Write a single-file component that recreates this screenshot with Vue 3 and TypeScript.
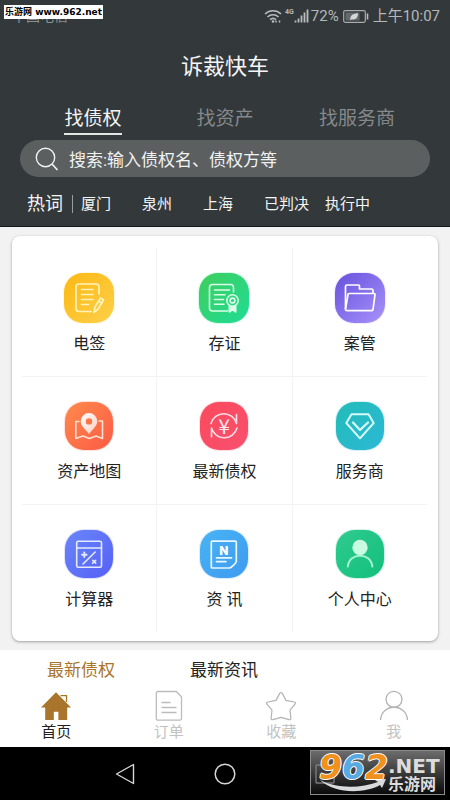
<script setup lang="ts">
import { ref } from 'vue'

interface Service {
  id: string
  label: string
  from: string
  to: string
  size: number
}

const searchTabs: string[] = ['找债权', '找资产', '找服务商']
const activeSearchTab = ref(0)
const keyword = ref('')

const hotWords: string[] = ['厦门', '泉州', '上海', '已判决', '执行中']

const services: Service[] = [
  { id: 'sign', label: '电签', from: '#fcb813', to: '#fdd04a', size: 50 },
  { id: 'evidence', label: '存证', from: '#3fce5c', to: '#1fdc96', size: 50 },
  { id: 'case', label: '案管', from: '#6750dc', to: '#a893fb', size: 50 },
  { id: 'map', label: '资产地图', from: '#ff8a4c', to: '#fb5b45', size: 48 },
  { id: 'claims', label: '最新债权', from: '#fb4a5c', to: '#f8506f', size: 48 },
  { id: 'provider', label: '服务商', from: '#22bcb8', to: '#2cb8d6', size: 48 },
  { id: 'calculator', label: '计算器', from: '#6a86f8', to: '#5560f6', size: 48 },
  { id: 'news', label: '资 讯', from: '#48b4f4', to: '#3f9af0', size: 48 },
  { id: 'profile', label: '个人中心', from: '#30cb90', to: '#12bf7c', size: 48 },
]

const feedTabs: string[] = ['最新债权', '最新资讯']
const activeFeedTab = ref(0)

const navItems = [
  { id: 'home', label: '首页' },
  { id: 'orders', label: '订单' },
  { id: 'favorites', label: '收藏' },
  { id: 'me', label: '我' },
]
const activeNav = ref('home')
</script>

<template>
  <div class="app">
    <header class="header">
      <div class="status">
        <span class="carrier">中国电信</span>
        <div class="status-right">
          <svg class="wifi" viewBox="0 0 18 14" aria-hidden="true">
            <g fill="none" stroke="#b9bbbc" stroke-width="1.6">
              <path d="M1 5a11.500 11.500 0 0 1 16 0" />
              <path d="M3.500 8a8 8 0 0 1 11 0" />
              <path d="M6 10.700a4.500 4.500 0 0 1 6 0" />
            </g>
            <circle cx="9" cy="12.500" r="1.300" fill="#b9bbbc" />
            <path d="M12 13.500v-2M15.500 13.500v-2" stroke="#b9bbbc" stroke-width="1.500" />
          </svg>
          <span class="net">4G</span>
          <svg class="signal" viewBox="0 0 15 14" aria-hidden="true">
            <path d="M1.500 13.500v-2M4.500 13.500v-4M7.500 13.500v-7M10.500 13.500v-10M13.500 13.500v-13" stroke="#b9bbbc" stroke-width="1.800" />
          </svg>
          <span>72%</span>
          <svg class="battery" viewBox="0 0 26 13" aria-hidden="true">
            <rect x="0.700" y="0.700" width="21.600" height="11.600" rx="1.500" fill="none" stroke="#a9abac" stroke-width="1.200" />
            <rect x="2.500" y="2.500" width="14" height="8" fill="#65696b" />
            <path d="M7.500 10.500c-1-4 1.500-7 7.500-7.200c0 4.500-2.500 7-6.200 5.900z" fill="#d5d7d7" />
            <path d="M24.500 3.500v6" stroke="#b9bbbc" stroke-width="1.600" />
          </svg>
          <span>上午10:07</span>
        </div>
      </div>

      <h1 class="title">诉裁快车</h1>

      <nav class="search-tabs">
        <div v-for="(tab, i) in searchTabs" :key="tab" class="search-tab-cell">
          <button
            type="button"
            class="search-tab"
            :class="{ active: activeSearchTab === i }"
            @click="activeSearchTab = i"
          >{{ tab }}</button>
        </div>
      </nav>

      <label class="search">
        <svg class="search-icon" viewBox="0 0 24 24" aria-hidden="true">
          <circle cx="10.500" cy="10.500" r="9.200" fill="none" stroke="#f1f2f2" stroke-width="1.400" />
          <path d="M17 17l5.500 6" stroke="#f1f2f2" stroke-width="1.700" />
        </svg>
        <input v-model="keyword" type="text" class="search-input" placeholder="搜索:输入债权名、债权方等" />
      </label>

      <div class="hot">
        <span class="hot-title">热词</span>
        <div class="hot-list">
          <a v-for="word in hotWords" :key="word" href="#" class="hot-word">{{ word }}</a>
        </div>
      </div>
    </header>

    <main class="content">
      <section class="card">
        <a v-for="s in services" :key="s.id" href="#" class="service">
          <svg class="service-icon" viewBox="0 0 50 50" aria-hidden="true">
            <defs>
              <linearGradient :id="'bg-' + s.id" x1="0" y1="0" x2="1" y2="1">
                <stop offset="0" :stop-color="s.from" />
                <stop offset="1" :stop-color="s.to" />
              </linearGradient>
              <linearGradient :id="'fg-' + s.id" x1="0" y1="0" x2="1" y2="1">
                <stop offset="0" stop-color="#ffffff" />
                <stop offset="1" stop-color="#ffffff" stop-opacity="0.65" />
              </linearGradient>
            </defs>
            <rect
              :x="(50 - s.size) / 2 - 1"
              :y="(50 - s.size) / 2 - 1"
              :width="s.size + 2"
              :height="s.size + 2"
              rx="20"
              :fill="s.to"
              opacity="0.18"
            />
            <rect
              :x="(50 - s.size) / 2"
              :y="(50 - s.size) / 2"
              :width="s.size"
              :height="s.size"
              rx="19"
              :fill="`url(#bg-${s.id})`"
            />

            <g v-if="s.id === 'sign'" fill="none" stroke="#fff3b8" stroke-width="1.700" stroke-linecap="round" stroke-linejoin="round">
              <path d="M35 21v-7a3 3 0 0 0-3-3H15a3 3 0 0 0-3 3v21.500a3 3 0 0 0 3 3h12" />
              <path d="M17.500 16.500H29M17.500 21.500H29M17.500 26.500H29M17.500 31.500h7" />
              <path d="M36.500 25l3 1.800-5.500 9.500-4 3 .8-5z" />
              <path d="M34.800 28.200l3 1.700" />
            </g>

            <g v-else-if="s.id === 'evidence'" fill="none" stroke="#dcffe9" stroke-width="1.600" stroke-linecap="round" stroke-linejoin="round">
              <path d="M34.500 19v-4.500a3 3 0 0 0-3-3h-18a3 3 0 0 0-3 3v20.500a3 3 0 0 0 3 3h15" />
              <path d="M15.500 17h15M15.500 21.800h10.500M15.500 26.500h9M15.500 31.200h9.500" />
              <circle cx="33.500" cy="27.500" r="5.700" />
              <circle cx="33.500" cy="27.500" r="2.400" />
              <path d="M30.300 33v6l3.200-2.500 3.200 2.500v-6" fill="#dcffe9" />
            </g>

            <g v-else-if="s.id === 'case'" fill="none" stroke="#ffffff" stroke-width="1.700" stroke-linejoin="round">
              <path d="M38 20v-2.500a1.500 1.500 0 0 0-1.500-1.500H24.500v-3a1 1 0 0 0-1-1H12a1.500 1.500 0 0 0-1.500 1.500V36" />
              <path d="M14 20.500h25a1 1 0 0 1 1 1.200L38 36.500a1.500 1.500 0 0 1-1.500 1.200H12a1.500 1.500 0 0 1-1.500-1.700L13 21.500a1 1 0 0 1 1-1z" />
            </g>

            <g v-else-if="s.id === 'map'">
              <path d="M15.500 20.500h-3.700v17l7.200-2.500 6.500 2.500 6.500-2.500 6.500 2.500v-17.500h-4" fill="none" stroke="#ffe1d2" stroke-width="1.600" stroke-linejoin="round" />
              <path fill-rule="evenodd" d="M25 12a8.300 8.300 0 0 0-8.300 8.300c0 5 5.300 8.500 8.300 13 3-4.500 8.300-8 8.300-13A8.300 8.300 0 0 0 25 12zm0 5.200a3.200 3.200 0 1 1 0 6.400 3.200 3.200 0 0 1 0-6.400z" fill="url(#fg-map)" />
            </g>

            <g v-else-if="s.id === 'claims'">
              <path d="M12 22.500a13.200 13.200 0 0 1 25.500 0v-9M38 27a13.200 13.200 0 0 1-25.500 0v9" fill="none" stroke="#ffdfe5" stroke-width="1.600" stroke-linecap="round" stroke-linejoin="round" />
              <text x="25" y="32.500" class="icon-yen">¥</text>
            </g>

            <g v-else-if="s.id === 'provider'" fill="none" stroke="#d4fbf8" stroke-width="2" stroke-linejoin="round">
              <path d="M16.500 13.300h17l5.200 8.700L25 37.300 11.300 22z" />
              <path d="M18 21.500l7 7.500 8-7.500" stroke-width="2.300" stroke-linecap="round" />
            </g>

            <g v-else-if="s.id === 'calculator'" fill="none" stroke="#e3eaff" stroke-width="1.600" stroke-linecap="round" stroke-linejoin="round">
              <rect x="12.700" y="12.300" width="24.800" height="26" rx="1.500" />
              <path d="M12.700 19h24.800" />
              <path d="M20.300 23.400v4.600M18 25.700h4.600" stroke-width="1.900" />
              <path d="M19 35l12.200-12" />
              <path d="M28.700 31.400l3 2.800M31.700 31.400l-3 2.800" />
            </g>

            <g v-else-if="s.id === 'news'" fill="none" stroke="#e9f8ff" stroke-width="1.700" stroke-linecap="round" stroke-linejoin="round">
              <path d="M12.300 13.200a1 1 0 0 1 1-1h23a1 1 0 0 1 1 1V32.500c0 1.500-5.500 6.500-7 6.500h-17a1 1 0 0 1-1-1z" />
              <path d="M17.500 28.900h15M17.500 32.600h9.500" />
              <text x="24.700" y="25.500" class="icon-letter">N</text>
            </g>

            <g v-else>
              <circle cx="25" cy="18.500" r="7.700" fill="#c8fbe2" />
              <path d="M12.800 37.500c1.500-14.500 23-14.500 24.500 0" fill="none" stroke="#a5f3cf" stroke-width="2" stroke-linecap="round" />
            </g>
          </svg>
          <span class="service-label">{{ s.label }}</span>
        </a>
      </section>
    </main>

    <div class="feed-tabs">
      <button
        v-for="(tab, i) in feedTabs"
        :key="tab"
        type="button"
        class="feed-tab"
        :class="{ active: activeFeedTab === i }"
        @click="activeFeedTab = i"
      >{{ tab }}</button>
    </div>

    <nav class="bottom-nav">
      <button
        v-for="item in navItems"
        :key="item.id"
        type="button"
        class="nav-item"
        :class="{ active: activeNav === item.id }"
        @click="activeNav = item.id"
      >
        <svg class="nav-icon" viewBox="0 0 32 32" aria-hidden="true">
          <g v-if="item.id === 'home'">
            <path d="M16 2.300L1 17.500h4.200V30h8.600v-8.300h4.600V30h8.800V17.500H31z" fill="#a9742c" />
            <path d="M20.500 5.700h6v6.300" fill="none" stroke="#a9742c" stroke-width="1.300" />
          </g>
          <g v-else-if="item.id === 'orders'" fill="none" stroke="#bcbcbc" stroke-width="1.300" stroke-linejoin="round">
            <path d="M5 1.500h18.500l5 5.500v21.500a1.700 1.700 0 0 1-1.700 1.700H5a1.700 1.700 0 0 1-1.700-1.700V3.200A1.700 1.700 0 0 1 5 1.500z" />
            <path d="M8.500 12.500h9M8.500 17.500h15M8.500 22.500h15" />
          </g>
          <path
            v-else-if="item.id === 'favorites'"
            d="M16 2.500q.9 0 1.300.9l3.700 7 8 1.600q2.400.5 1 2.200l-5 6 .9 8q0 2-1.900 1.400L16 27.300l-8 2.300q-1.900.6-1.900-1.400l.9-8-5-6q-1.400-1.700 1-2.200l8-1.600 3.700-7q.4-.9 1.300-.9z"
            fill="none"
            stroke="#b3b3b3"
            stroke-width="1.200"
            stroke-linejoin="round"
          />
          <g v-else fill="none" stroke="#b3b3b3" stroke-width="1.300">
            <circle cx="16" cy="9.300" r="8" />
            <path d="M2.500 30c1-17 26-17 27 0" />
          </g>
        </svg>
        <span>{{ item.label }}</span>
      </button>
    </nav>

    <footer class="system-bar">
      <button type="button" class="system-button" aria-label="返回">
        <svg viewBox="0 0 24 24" aria-hidden="true">
          <path d="M20.500 2.500v19L3.500 12z" fill="none" stroke="#d6d6d6" stroke-width="1.400" stroke-linejoin="round" />
        </svg>
      </button>
      <button type="button" class="system-button" aria-label="主屏幕">
        <svg viewBox="0 0 24 24" aria-hidden="true">
          <circle cx="12" cy="12" r="9.800" fill="none" stroke="#d6d6d6" stroke-width="1.500" />
        </svg>
      </button>
      <button type="button" class="system-button" aria-label="最近任务">
        <svg viewBox="0 0 24 24" aria-hidden="true">
          <rect x="3" y="3" width="18" height="18" rx="1" fill="none" stroke="#d6d6d6" stroke-width="1.400" />
        </svg>
      </button>
    </footer>

    <div class="site-tag">乐游网 www.962.net</div>

    <div class="site-logo">
      <svg class="logo-swoosh" viewBox="0 0 68 14" aria-hidden="true">
        <path d="M1 1c15 8 39 9 58 2l-3-2 11-1-4 9-2-3C45 15 16 15 1 1z" fill="#d9dadb" />
      </svg>
      <div class="logo-number"><span class="orange">9</span><span class="blue">6</span><span class="orange">2</span></div>
      <div class="logo-side">
        <span class="logo-net">.NET</span>
        <span class="logo-name">乐游网</span>
      </div>
    </div>
  </div>
</template>

<style>
body {
  margin: 0;
  background: #000000;
}
</style>

<style scoped>
.app {
  position: relative;
  display: flex;
  flex-direction: column;
  min-height: 100vh;
  font-family: Roboto, "Noto Sans CJK SC", sans-serif;
  color: #222222;
  background: #f2f2f2;
}

.app *,
.app {
  box-sizing: border-box;
}

button {
  margin: 0;
  padding: 0;
  border: 0;
  background: none;
  font-family: inherit;
  color: inherit;
  cursor: pointer;
}

a {
  color: inherit;
  text-decoration: none;
}

.header {
  background: #33383b;
  border-bottom: 1px solid #15181a;
  color: #f4f5f5;
}

.status {
  display: flex;
  justify-content: space-between;
  height: 32px;
  padding: 0 10px 0 12px;
  font-size: 15px;
  line-height: 32px;
  color: #b5b8b9;
}

.carrier {
  font-size: 14px;
  color: #8d9193;
}

.status-right {
  display: flex;
  align-items: center;
}

.wifi {
  width: 18px;
  height: 14px;
}

.net {
  align-self: flex-start;
  margin-left: 3px;
  padding-top: 7px;
  font-size: 7px;
  font-weight: bold;
  line-height: 10px;
}

.signal {
  width: 15px;
  height: 14px;
  margin-right: 2px;
}

.battery {
  width: 26px;
  height: 13px;
  margin: 0 4px;
}

.title {
  margin: 0;
  padding-top: 2px;
  font-size: 22px;
  font-weight: 400;
  line-height: 66px;
  text-align: center;
}

.search-tabs {
  display: grid;
  grid-template-columns: repeat(3, 1fr);
  padding: 0 27px;
}

.search-tab-cell {
  text-align: center;
}

.search-tab {
  height: 35px;
  padding: 5px 0 0;
  border-bottom: 2px solid transparent;
  font-size: 19px;
  line-height: 28px;
  color: #85898b;
}

.search-tab.active {
  border-bottom-color: #e4e5e5;
  color: #f4f5f5;
}

.search {
  display: flex;
  align-items: center;
  gap: 10px;
  height: 37px;
  margin: 5px 20px 0;
  padding: 0 15px;
  border-radius: 19px;
  background: #5b5f60;
}

.search-icon {
  flex: none;
  width: 24px;
  height: 24px;
}

.search-input {
  flex: 1;
  min-width: 0;
  padding: 2px 0 0;
  border: 0;
  outline: 0;
  background: transparent;
  font-family: inherit;
  font-size: 17px;
  color: #f1f2f2;
}

.search-input::placeholder {
  color: #f1f2f2;
  opacity: 1;
}

.hot {
  display: flex;
  align-items: center;
  height: 49px;
  padding: 5px 20px 0 27px;
}

.hot-title {
  padding-right: 9px;
  border-right: 1px solid #9a9d9e;
  font-size: 18px;
  line-height: 18px;
}

.hot-list {
  display: flex;
  padding-left: 8px;
}

.hot-word {
  min-width: 61px;
  font-size: 15px;
  line-height: 20px;
}

.content {
  padding: 9px 12px;
}

.card {
  display: grid;
  grid-template-columns: repeat(3, 1fr);
  padding: 12px 10px 9px;
  border-radius: 8px;
  background: #ffffff;
  box-shadow: 0 1px 3px rgba(0, 0, 0, 0.35);
}

.service {
  display: flex;
  flex-direction: column;
  align-items: center;
  height: 128px;
  padding-top: 24px;
  border-right: 1px solid #f3f3f3;
  border-top: 1px solid #f3f3f3;
}

.service:nth-child(3n) {
  border-right-color: transparent;
}

.service:nth-child(-n + 3) {
  border-top-color: transparent;
}

.service-icon {
  width: 50px;
  height: 50px;
  overflow: visible;
}

.icon-yen {
  fill: #ffe8ec;
  font-family: "Noto Sans CJK SC", sans-serif;
  font-size: 21px;
  text-anchor: middle;
}

.icon-letter {
  fill: #ffffff;
  stroke: none;
  font-family: Roboto, sans-serif;
  font-size: 13px;
  font-weight: 900;
  text-anchor: middle;
}

.service-label {
  margin-top: 9px;
  font-size: 16px;
  line-height: 24px;
}

.feed-tabs {
  display: flex;
  gap: 75px;
  padding: 0 47px;
  background: #ffffff;
}

.feed-tab {
  font-size: 17px;
  line-height: 40px;
  color: #222222;
}

.feed-tab.active {
  color: #a9742c;
}

.bottom-nav {
  display: grid;
  grid-template-columns: repeat(4, 1fr);
  padding-bottom: 5px;
  background: #ffffff;
}

.nav-item {
  display: flex;
  flex-direction: column;
  align-items: center;
  font-size: 15px;
  line-height: 20px;
  color: #c2c2c2;
}

.nav-item.active {
  color: #222222;
}

.nav-icon {
  width: 32px;
  height: 32px;
}

.system-bar {
  display: flex;
  flex: 1;
  align-items: center;
  justify-content: center;
  gap: 76px;
  min-height: 53px;
  background: #000000;
}

.system-button {
  width: 24px;
  height: 24px;
}

.system-button svg {
  display: block;
}

.site-tag {
  position: absolute;
  top: 5px;
  left: 4px;
  padding: 0 1px;
  background: #ffffff;
  color: #000000;
  font-family: "DejaVu Sans", "Noto Sans CJK SC", sans-serif;
  font-size: 9px;
  font-weight: bold;
  line-height: 14px;
  white-space: nowrap;
}

.site-logo {
  position: absolute;
  right: 5px;
  bottom: 5px;
  display: flex;
  width: 135px;
  height: 45px;
  padding-left: 8px;
  border: 1px solid #8b8b8b;
  background: linear-gradient(rgba(120, 120, 120, 0.9), rgba(20, 20, 20, 0.5));
}

.logo-swoosh {
  position: absolute;
  left: 8px;
  bottom: 1px;
  width: 68px;
  height: 14px;
}

.logo-number {
  position: relative;
  font-family: "DejaVu Sans", sans-serif;
  font-size: 33px;
  font-style: italic;
  font-weight: bold;
  line-height: 34px;
  text-shadow: 1px 0 #ffffff, -1px 0 #ffffff, 0 1px #ffffff, 0 -1px #ffffff;
}

.orange {
  color: #f0911e;
}

.blue {
  color: #58aae0;
}

.logo-side {
  display: flex;
  flex-direction: column;
  color: #dcdcdc;
  font-weight: bold;
}

.logo-net {
  padding-top: 6px;
  font-family: "DejaVu Sans", sans-serif;
  font-size: 20px;
  line-height: 18px;
}

.logo-name {
  font-size: 16px;
  line-height: 20px;
}
</style>
